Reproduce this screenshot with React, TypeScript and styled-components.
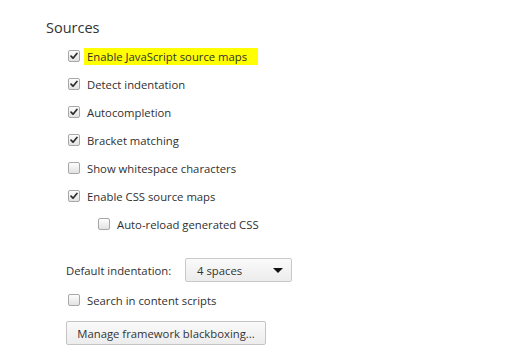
import styled, { createGlobalStyle } from "styled-components";

const GlobalStyle = createGlobalStyle`
  html, body {
    margin: 0;
    padding: 0;
    background: #ffffff;
  }
  body {
    font-family: "Open Sans", "Noto Sans", sans-serif;
    color: #303030;
  }
`;

type Option = {
  label: string;
  checked: boolean;
  nested?: boolean;
  highlight?: boolean;
};

const OPTIONS: Option[] = [
  { label: "Enable JavaScript source maps", checked: true, highlight: true },
  { label: "Detect indentation", checked: true },
  { label: "Autocompletion", checked: true },
  { label: "Bracket matching", checked: true },
  { label: "Show whitespace characters", checked: false },
  { label: "Enable CSS source maps", checked: true },
  { label: "Auto-reload generated CSS", checked: false, nested: true },
];

const CheckBox = ({ checked }: { checked: boolean }) => (
  <Box>
    {checked && (
      <svg width="8" height="8" viewBox="0 0 9 9">
        <path
          d="M1.2 4.6 L3.4 7 L7.8 1.6"
          fill="none"
          stroke="#2b2b2b"
          strokeWidth="1.9"
          strokeLinecap="round"
          strokeLinejoin="round"
        />
      </svg>
    )}
  </Box>
);

const App = () => {
  return (
    <Page>
      <GlobalStyle />
      <Heading>Sources</Heading>
      <List>
        {OPTIONS.map((opt) => (
          <Row key={opt.label} $nested={opt.nested}>
            <CheckBox checked={opt.checked} />
            <Label $highlight={opt.highlight}>{opt.label}</Label>
          </Row>
        ))}
      </List>
      <SelectRow>
        <SelectLabel>Default indentation:</SelectLabel>
        <Select>
          <span>4 spaces</span>
          <Arrow />
        </Select>
      </SelectRow>
      <PlainRow>
        <CheckBox checked={false} />
        <Label>Search in content scripts</Label>
      </PlainRow>
      <Button>Manage framework blackboxing...</Button>
    </Page>
  );
};

export default App;

const Page = styled.div`
  width: 530px;
  height: 358px;
  box-sizing: border-box;
  padding: 18px 0 0 46px;
  display: flex;
  flex-direction: column;
  align-items: flex-start;
  font-size: 11.3px;
`;

const Heading = styled.div`
  font-size: 14.5px;
  line-height: 20px;
  color: #333;
  margin-bottom: 4px;
`;

const List = styled.div`
  display: flex;
  flex-direction: column;
  padding-left: 22px;
`;

const Row = styled.div<{ $nested?: boolean }>`
  display: flex;
  align-items: center;
  height: 28px;
  padding-left: ${(p) => (p.$nested ? "30px" : "0")};
`;

const PlainRow = styled(Row)`
  padding-left: 22px;
  margin-top: 4px;
`;

const Box = styled.span`
  width: 10px;
  height: 10px;
  border: 1px solid #a8a8a8;
  border-radius: 2px;
  background: linear-gradient(#fdfdfd, #e2e2e2);
  display: flex;
  align-items: center;
  justify-content: center;
  margin-right: 7px;
`;

const Label = styled.span<{ $highlight?: boolean }>`
  line-height: 17px;
  padding: ${(p) => (p.$highlight ? "0 11px 0 3px" : "0")};
  margin-left: ${(p) => (p.$highlight ? "-3px" : "0")};
  background: ${(p) => (p.$highlight ? "#ffff00" : "transparent")};
  color: #303030;
`;

const SelectRow = styled.div`
  display: flex;
  align-items: center;
  margin-top: 20px;
  padding-left: 20px;
  height: 24px;
`;

const SelectLabel = styled.span`
  width: 119px;
`;

const Select = styled.div`
  width: 107px;
  height: 24px;
  box-sizing: border-box;
  border: 1px solid #c8c8c8;
  border-radius: 2px;
  background: linear-gradient(#fafafa, #ececec);
  display: flex;
  align-items: center;
  justify-content: space-between;
  padding: 0 8px 0 11px;
  color: #333;
`;

const Arrow = styled.span`
  width: 0;
  height: 0;
  border-left: 5px solid transparent;
  border-right: 5px solid transparent;
  border-top: 5px solid #111;
`;

const Button = styled.button`
  margin-top: 7px;
  margin-left: 20px;
  width: 200px;
  height: 24px;
  border: 1px solid #c4c4c4;
  border-radius: 2px;
  background: linear-gradient(#fafafa, #ececec);
  font-family: inherit;
  font-size: 11.3px;
  color: #333;
  padding: 0;
`;
